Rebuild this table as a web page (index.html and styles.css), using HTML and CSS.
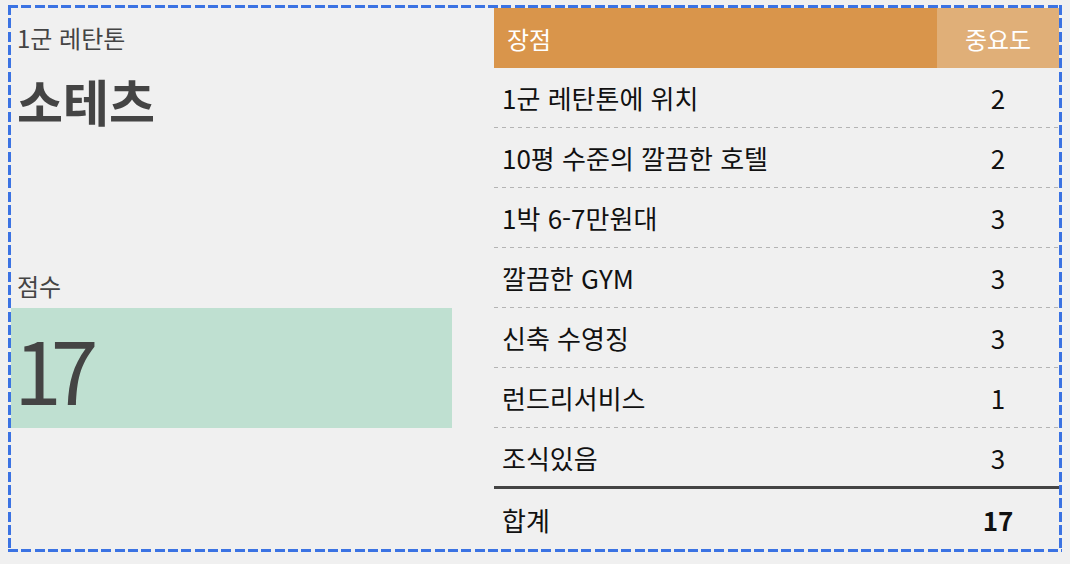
FILE: index.html
```html
<!DOCTYPE html>
<html lang="ko">
<head>
<meta charset="utf-8">
<title>소테츠</title>
<link rel="stylesheet" href="styles.css">
</head>
<body>
<div class="frame">
  <section class="summary">
    <div class="district">1군 레탄톤</div>
    <h1 class="hotel">소테츠</h1>
    <div class="score-label">점수</div>
    <div class="score-box"><span class="score">17</span></div>
  </section>
  <section class="pros">
    <div class="row head">
      <div class="cell name">장점</div>
      <div class="cell weight">중요도</div>
    </div>
    <div class="row item"><div class="cell name">1군 레탄톤에 위치</div><div class="cell weight">2</div></div>
    <div class="row item"><div class="cell name">10평 수준의 깔끔한 호텔</div><div class="cell weight">2</div></div>
    <div class="row item"><div class="cell name">1박 6-7만원대</div><div class="cell weight">3</div></div>
    <div class="row item"><div class="cell name">깔끔한 GYM</div><div class="cell weight">3</div></div>
    <div class="row item"><div class="cell name">신축 수영징</div><div class="cell weight">3</div></div>
    <div class="row item"><div class="cell name">런드리서비스</div><div class="cell weight">1</div></div>
    <div class="row item last"><div class="cell name">조식있음</div><div class="cell weight">3</div></div>
    <div class="row total"><div class="cell name">합계</div><div class="cell weight">17</div></div>
  </section>
</div>
</body>
</html>
```
FILE: styles.css
```css
html, body {
  margin: 0;
  padding: 0;
  background: #f0f0f0;
}
body {
  padding: 5px 8px 0 8px;
  font-family: "Noto Sans CJK KR", "Noto Sans", sans-serif;
  color: #444;
}
.frame {
  box-sizing: border-box;
  width: 1054px;
  height: 547px;
  padding: 3px;
  display: flex;
  background:
    repeating-linear-gradient(90deg, #3b73e3 0 10px, transparent 10px 13.33px) left top / 100% 3px no-repeat,
    repeating-linear-gradient(90deg, #3b73e3 0 10px, transparent 10px 13.33px) left bottom / 100% 3px no-repeat,
    repeating-linear-gradient(180deg, #3b73e3 0 10px, transparent 10px 13.33px) left top / 3px 100% no-repeat,
    repeating-linear-gradient(180deg, #3b73e3 0 10px, transparent 10px 13.33px) right top / 3px 100% no-repeat;
}
.summary {
  width: 441px;
  display: flex;
  flex-direction: column;
}
.district {
  margin: 18px 0 0 6px;
  font-size: 24px;
  line-height: 24px;
}
.hotel {
  margin: 25px 0 0 6px;
  font-size: 50px;
  line-height: 50px;
  font-weight: 700;
}
.score-label {
  margin: 149px 0 0 6px;
  font-size: 24px;
  line-height: 24px;
}
.score-box {
  margin-top: 10px;
  height: 120px;
  background: #bfe0d1;
  padding: 17px 0 0 3px;
  box-sizing: border-box;
}
.score {
  display: block;
  font-size: 86px;
  line-height: 86px;
  letter-spacing: -11px;
}
.pros {
  margin-left: 42px;
  flex: 1;
  display: flex;
  flex-direction: column;
  color: #111;
}
.row {
  display: flex;
  align-items: center;
  box-sizing: border-box;
  height: 60px;
}
.cell.name {
  flex: 1;
  padding-left: 8px;
  font-size: 26px;
}
.cell.weight {
  width: 122px;
  text-align: center;
  font-size: 26px;
}
.head {
  align-items: stretch;
  color: #fff;
  background: #d9954b;
}
.head .cell {
  display: flex;
  align-items: center;
  font-size: 24px;
}
.head .name {
  padding-left: 13px;
}
.head .weight {
  justify-content: center;
  background: #e0af78;
}
.item {
  padding-bottom: 1px;
  background: repeating-linear-gradient(90deg, #b4b4b4 0 4px, transparent 4px 8px) left bottom / 100% 1px no-repeat;
}
.item.last {
  height: 61px;
  padding-bottom: 3px;
  background: linear-gradient(#444, #444) left bottom / 100% 3px no-repeat;
}
.total .weight {
  font-weight: 700;
}
```
